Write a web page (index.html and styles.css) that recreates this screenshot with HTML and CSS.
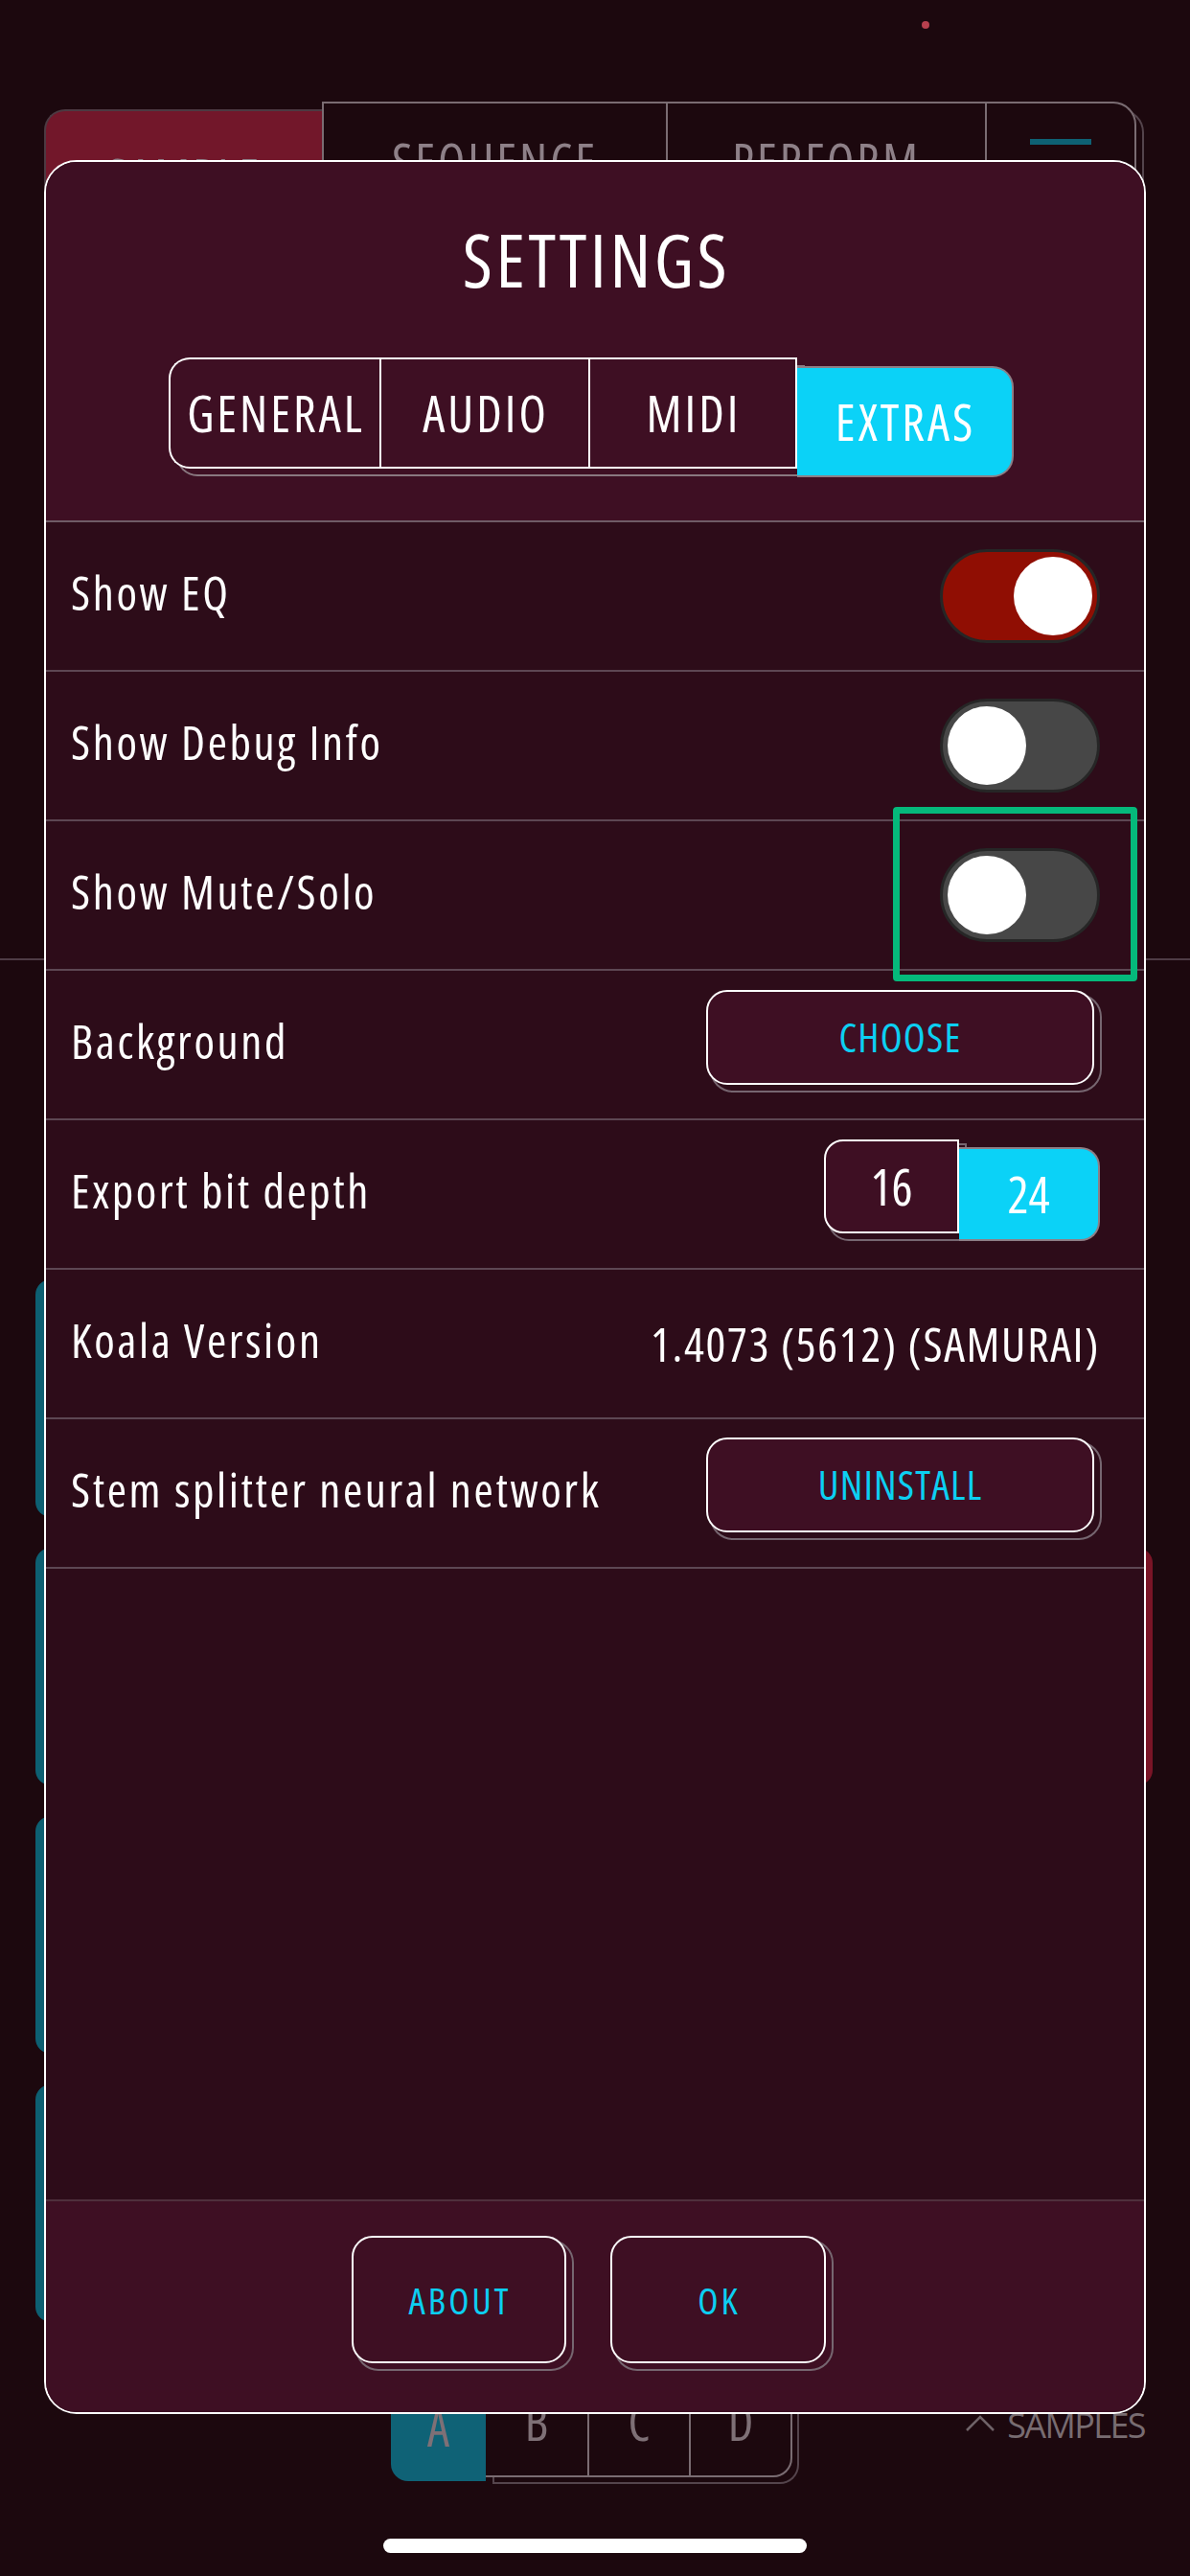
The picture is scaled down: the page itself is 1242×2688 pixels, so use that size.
FILE: index.html
```html
<!DOCTYPE html>
<html lang="en">
<head>
<meta charset="utf-8">
<title>Settings</title>
<link rel="stylesheet" href="styles.css">
</head>
<body>
<div class="app">
  <div class="status"><span class="rec-dot"></span></div>
  <div class="topnav">
    <div class="nav-sample"><span>SAMPLE</span></div>
    <div class="nav-group">
      <div class="nav-cell nav-seq">SEQUENCE</div>
      <div class="nav-cell nav-perf">PERFORM</div>
      <div class="nav-cell nav-menu"><span class="menu-bar"></span></div>
    </div>
  </div>
  <div class="hline"></div>
  <div class="pads">
    <div class="pad-row"><div class="pad"></div></div>
    <div class="pad-row"><div class="pad"></div><div class="pad pad-red"></div></div>
    <div class="pad-row"><div class="pad"></div></div>
    <div class="pad-row"><div class="pad"></div></div>
  </div>
  <div class="bottombar">
    <div class="bank">
      <div class="bank-key bank-on">A</div>
      <div class="bank-raised">
        <div class="bank-key">B</div>
        <div class="bank-key">C</div>
        <div class="bank-key">D</div>
      </div>
    </div>
    <div class="samples-label">
      <svg class="caret" width="32" height="18" viewBox="0 0 32 18"><path d="M2 16 L16 2 L30 16" fill="none" stroke="#6f6368" stroke-width="2.5"/></svg>
      <span>SAMPLES</span>
    </div>
  </div>
  <div class="home-indicator"></div>
</div>

<div class="modal">
  <header class="m-head">
    <h1 class="m-title">SETTINGS</h1>
    <div class="tabs">
      <div class="tabs-raised">
        <div class="tab">GENERAL</div>
        <div class="tab">AUDIO</div>
        <div class="tab">MIDI</div>
      </div>
      <div class="tab tab-on">EXTRAS</div>
    </div>
  </header>
  <div class="m-rows">
    <div class="row">
      <span class="label">Show EQ</span>
      <span class="toggle toggle-on"><span class="knob"></span></span>
    </div>
    <div class="row">
      <span class="label">Show Debug Info</span>
      <span class="toggle"><span class="knob"></span></span>
    </div>
    <div class="row">
      <span class="label">Show Mute/Solo</span>
      <span class="toggle-wrap">
        <span class="toggle"><span class="knob"></span></span>
        <span class="focus-ring"></span>
      </span>
    </div>
    <div class="row">
      <span class="label">Background</span>
      <button class="btn btn-wide">CHOOSE</button>
    </div>
    <div class="row">
      <span class="label">Export bit depth</span>
      <div class="seg2">
        <div class="seg2-key seg2-raised">16</div>
        <div class="seg2-key seg2-on">24</div>
      </div>
    </div>
    <div class="row">
      <span class="label">Koala Version</span>
      <span class="value">1.4073 (5612) (SAMURAI)</span>
    </div>
    <div class="row">
      <span class="label">Stem splitter neural network</span>
      <button class="btn btn-wide btn-low">UNINSTALL</button>
    </div>
  </div>
  <div class="m-spacer"></div>
  <footer class="m-foot">
    <button class="btn btn-foot">ABOUT</button>
    <button class="btn btn-foot btn-ok">OK</button>
  </footer>
</div>
</body>
</html>
```

FILE: styles.css
```css
:root {
  --ui: "Open Sans", "Noto Sans", sans-serif;
  --outer: #1c080e;
  --head: #3e0f23;
  --rowbg: #2d0c19;
  --cyan: #0ccff2;
  --ghost: #766670;
}

* { box-sizing: border-box; }

html, body {
  margin: 0;
  padding: 0;
}

body {
  width: 1242px;
  height: 2688px;
  overflow: hidden;
  background: var(--outer);
  font-family: var(--ui);
  font-stretch: 75%;
  color: #fff;
  position: relative;
}

/* ---------- background app ---------- */
.app {
  display: flex;
  flex-direction: column;
  height: 2688px;
}

.status {
  height: 106px;
  padding: 22px 0 0 962px;
}

.rec-dot {
  display: block;
  width: 8px;
  height: 8px;
  border-radius: 50%;
  background: #b8404e;
}

.topnav {
  display: flex;
  align-items: flex-start;
  margin-left: 46px;
  width: 1150px;
  height: 150px;
}

.nav-sample {
  width: 290px;
  height: 140px;
  margin-top: 8px;
  background: #72172a;
  border: 2px solid #4c3a42;
  border-right: 0;
  border-radius: 22px 0 0 0;
  text-align: center;
  color: #8e8088;
  font-size: 52px;
  letter-spacing: 3px;
  line-height: 1;
  padding-top: 42px;
}

.nav-group {
  display: flex;
  width: 850px;
  height: 150px;
  border: 2px solid #7a6c72;
  border-bottom: 0;
  border-radius: 0 24px 0 0;
  box-shadow: 8px 8px 0 -2px var(--outer), 8px 8px 0 0 #54444c;
}

.nav-cell {
  height: 100%;
  text-align: center;
  color: #8e8088;
  font-size: 52px;
  letter-spacing: 3px;
  line-height: 1;
  padding-top: 34px;
}

.nav-seq { width: 357px; }
.nav-perf { width: 333px; border-left: 2px solid #7a6c72; }
.nav-menu { flex: 1; border-left: 2px solid #7a6c72; padding-top: 37px; }

.menu-bar {
  display: block;
  width: 64px;
  height: 6px;
  margin: 0 auto;
  background: #0e6174;
}

.hline {
  margin-top: 744px;
  height: 2px;
  background: #4e3c45;
}

.pads {
  margin-top: 333px;
  padding-left: 37px;
  display: flex;
  flex-direction: column;
  gap: 32px;
}

.pad-row {
  display: flex;
  height: 248px;
}

.pad {
  width: 560px;
  height: 100%;
  border-radius: 16px;
  background: #0d5f72;
}

.pad-red {
  margin-left: auto;
  margin-right: 39px;
  background: #7a1426;
}

.bottombar {
  display: flex;
  align-items: flex-start;
  margin-top: 48px;
  padding-left: 408px;
  height: 130px;
}

.bank {
  display: flex;
  align-items: flex-start;
}

.bank-key {
  height: 110px;
  text-align: center;
  color: #7e7076;
  font-size: 52px;
  line-height: 1;
  padding-top: 28px;
}

.bank-on {
  width: 99px;
  margin-top: 8px;
  background: #0f6276;
  border-radius: 0 0 0 18px;
}

.bank-raised {
  display: flex;
  border: 2px solid #7a6c72;
  border-left: 0;
  border-radius: 0 0 20px 0;
  box-shadow: 7px 7px 0 -2px var(--outer), 7px 7px 0 0 #54444c;
}

.bank-raised .bank-key { width: 106px; height: 110px; }
.bank-raised .bank-key + .bank-key { border-left: 2px solid #7a6c72; }

.samples-label {
  display: flex;
  align-items: center;
  gap: 12px;
  margin-left: auto;
  margin-right: 47px;
  margin-top: 42px;
  color: #786c71;
  font-size: 36px;
  font-stretch: 100%;
  letter-spacing: -1.6px;
  line-height: 1;
}

.caret { display: block; margin-top: -4px; }

.home-indicator {
  width: 442px;
  height: 15px;
  margin: 48px 0 0 400px;
  border-radius: 8px;
  background: #fff;
}

/* ---------- modal ---------- */
.modal {
  position: absolute;
  left: 46px;
  top: 167px;
  width: 1150px;
  height: 2352px;
  border: 2px solid #fff;
  border-radius: 34px;
  overflow: hidden;
  background: var(--rowbg);
  display: flex;
  flex-direction: column;
}

.m-head {
  height: 376px;
  background: var(--head);
  border-bottom: 2px solid #6f5b66;
  padding-top: 64px;
  display: flex;
  flex-direction: column;
  align-items: center;
}

.m-title {
  margin: 0;
  font-size: 76px;
  font-weight: 400;
  line-height: 76px;
  letter-spacing: 3.6px;
  padding-left: 3px;
}

.tabs {
  margin-top: 64px;
  display: flex;
  align-items: flex-start;
  padding-right: 9px;
}

.tabs-raised {
  display: flex;
  height: 116px;
  border: 2px solid #fff;
  border-right: 0;
  border-radius: 22px 0 0 22px;
  background: var(--head);
  box-shadow: 8px 8px 0 -2px var(--head), 8px 8px 0 0 #8a7880;
}

.tab {
  width: 218px;
  height: 112px;
  display: flex;
  align-items: center;
  justify-content: center;
  font-size: 52px;
  letter-spacing: 3px;
  padding-left: 3px;
  line-height: 1;
}

.tabs-raised .tab + .tab { border-left: 2px solid #fff; }
.tabs-raised .tab:last-child { border-right: 2px solid #fff; }

.tab-on {
  width: 226px;
  height: 116px;
  margin-top: 9px;
  background: #0bd2f7;
  border: 2px solid #8d7f86;
  border-left: 0;
  border-radius: 0 22px 22px 0;
}

.m-rows {
  display: flex;
  flex-direction: column;
}

.row {
  height: 156px;
  border-bottom: 2px solid #5d4753;
  display: flex;
  align-items: center;
  justify-content: space-between;
  padding: 0 46px 0 26px;
}

.label, .value {
  font-size: 49px;
  line-height: 1;
  white-space: nowrap;
}

.label {
  letter-spacing: 2.6px;
  padding-bottom: 8px;
}

.value {
  letter-spacing: 1.7px;
}

.toggle-wrap {
  position: relative;
  display: block;
}

.toggle {
  display: flex;
  justify-content: flex-start;
  width: 167px;
  height: 98px;
  padding: 5px;
  border: 3px solid #262626;
  border-radius: 49px;
  background: #474747;
}

.toggle-on {
  justify-content: flex-end;
  background: #900e03;
}

.knob {
  display: block;
  width: 82px;
  height: 82px;
  border-radius: 50%;
  background: #fff;
}

.focus-ring {
  position: absolute;
  left: -49px;
  top: -43px;
  width: 255px;
  height: 182px;
  border: 7px solid #05b97b;
  border-radius: 4px;
}

.btn {
  font-family: var(--ui);
  font-stretch: 75%;
  color: var(--cyan);
  background: var(--head);
  border: 2px solid #fff;
  border-radius: 22px;
  padding: 0;
  line-height: 1;
  cursor: pointer;
}

.btn-wide {
  width: 405px;
  height: 99px;
  font-size: 42px;
  letter-spacing: 1.2px;
  margin-right: 6px;
  margin-bottom: 16px;
  box-shadow: 6px 6px 0 0 var(--rowbg), 6px 6px 0 2px var(--ghost);
}

.btn-low { margin-bottom: 18px; }

.seg2 {
  display: flex;
  align-items: flex-start;
  margin-bottom: 8px;
}

.seg2-key {
  height: 98px;
  display: flex;
  align-items: center;
  justify-content: center;
  font-size: 52px;
  line-height: 1;
}

.seg2-raised {
  width: 141px;
  background: var(--head);
  border: 2px solid #fff;
  border-radius: 20px 0 0 20px;
  box-shadow: 6px 6px 0 0 var(--rowbg), 6px 6px 0 2px var(--ghost);
}

.seg2-on {
  width: 147px;
  margin-top: 8px;
  background: #0bd2f7;
  border: 2px solid #8d7f86;
  border-left: 0;
  border-radius: 0 20px 20px 0;
}

.m-spacer { flex: 1; }

.m-foot {
  height: 222px;
  background: var(--head);
  border-top: 2px solid #4f2f3c;
  display: flex;
  justify-content: center;
  align-items: flex-start;
  gap: 46px;
  padding: 36px 14px 0 0;
}

.btn-foot {
  width: 224px;
  height: 133px;
  font-size: 39px;
  letter-spacing: 3px;
  padding-left: 3px;
  box-shadow: 6px 6px 0 0 var(--head), 6px 6px 0 2px var(--ghost);
}

.btn-ok { width: 225px; }
```
